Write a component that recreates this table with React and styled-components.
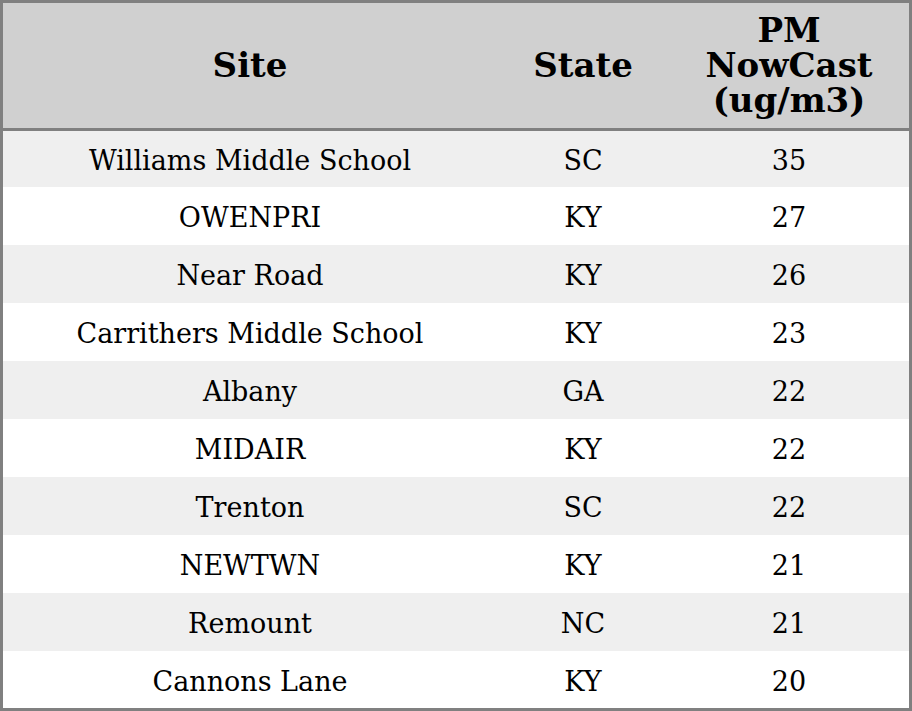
import React from "react";
import styled, { createGlobalStyle } from "styled-components";

const rows = [
  ["Williams Middle School", "SC", 35],
  ["OWENPRI", "KY", 27],
  ["Near Road", "KY", 26],
  ["Carrithers Middle School", "KY", 23],
  ["Albany", "GA", 22],
  ["MIDAIR", "KY", 22],
  ["Trenton", "SC", 22],
  ["NEWTWN", "KY", 21],
  ["Remount", "NC", 21],
  ["Cannons Lane", "KY", 20],
];

const App = () => {
  return (
    <>
      <GlobalStyle />
      <Table>
        <colgroup>
          <col style={{ width: 494 }} />
          <col style={{ width: 172 }} />
          <col style={{ width: 240 }} />
        </colgroup>
        <thead>
          <tr>
            <HeadCell>Site</HeadCell>
            <HeadCell>State</HeadCell>
            <HeadCell>
              PM
              <br />
              NowCast
              <br />
              (ug/m3)
            </HeadCell>
          </tr>
        </thead>
        <tbody>
          {rows.map(([site, state, value], i) => (
            <Row
              key={site}
              $striped={i % 2 === 0}
              $height={i === 0 ? 56 : i === rows.length - 1 ? 57 : 58}
            >
              <Cell>{site}</Cell>
              <Cell>{state}</Cell>
              <Cell>{value}</Cell>
            </Row>
          ))}
        </tbody>
      </Table>
    </>
  );
};

const GlobalStyle = createGlobalStyle`
  body {
    margin: 0;
    background: #ffffff;
  }
`;

const Table = styled.table`
  width: 912px;
  table-layout: fixed;
  border-collapse: separate;
  border-spacing: 0;
  border: 3px solid #808080;
  font-family: "DejaVu Serif", serif;
  color: #000000;
`;

const HeadCell = styled.th`
  height: 106px;
  padding: 9px 0 10px;
  background: #d0d0d0;
  border-bottom: 3px solid #808080;
  font-size: 34px;
  font-weight: bold;
  line-height: 35px;
  text-align: center;
  vertical-align: middle;
`;

const Row = styled.tr`
  background: ${(p) => (p.$striped ? "#efefef" : "#ffffff")};

  td {
    height: ${(p) => p.$height - 4}px;
  }
`;

const Cell = styled.td`
  padding: 4px 0 0;
  font-size: 27px;
  line-height: 30px;
  text-align: center;
  vertical-align: middle;
`;

export default App;
